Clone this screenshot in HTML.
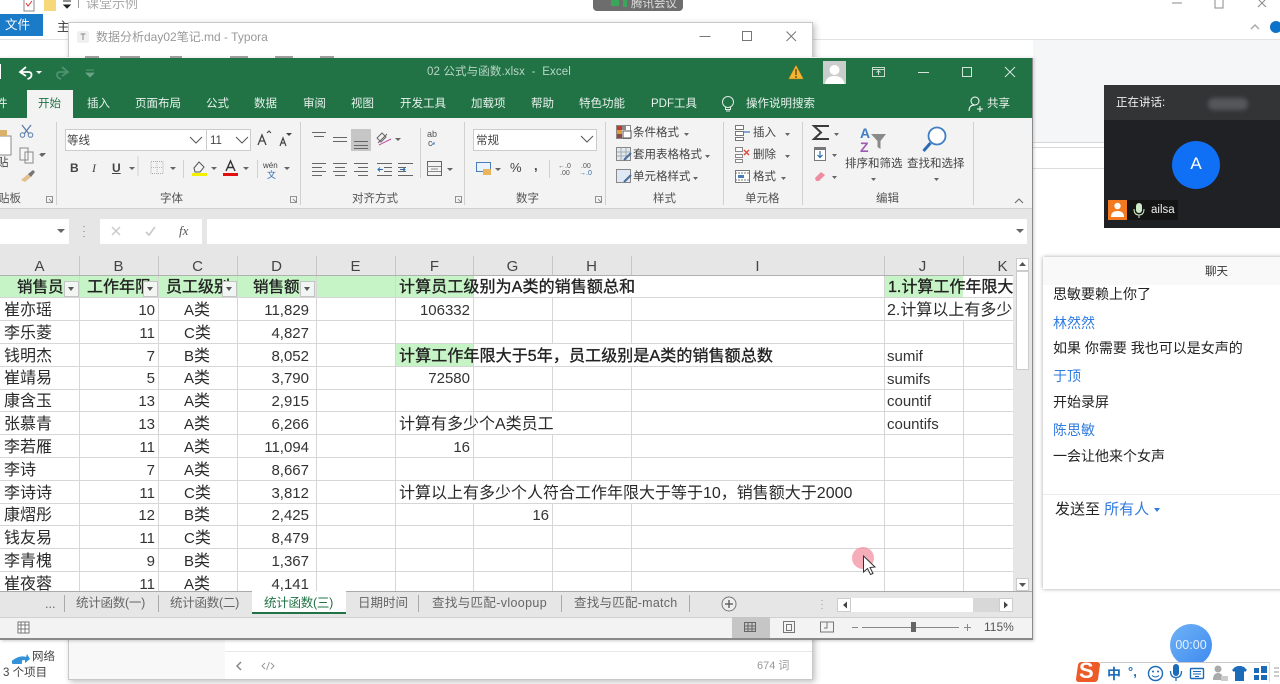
<!DOCTYPE html>
<html lang="zh"><head><meta charset="utf-8"><title>Excel</title>
<style>
html,body{margin:0;padding:0;background:#fff}
body{width:1280px;height:682px;overflow:hidden;position:relative;font-family:"Liberation Sans","Noto Sans CJK SC",sans-serif;color:#333;filter:blur(.3px)}
.b,.t{position:absolute}
.t{white-space:nowrap;line-height:20px;font-size:11.5px}
svg{position:absolute;left:0;top:0}
.tab{color:#e8f1ec;font-size:11.5px;transform:translateY(1px)}
.r{color:#444;font-size:11.5px;transform:translateY(1px)}
.c{font-size:16px;color:#2a2a2a;transform:translateY(1px)}
.n{font-size:15px;color:#333;text-align:right;transform:translateY(1px)}
.h{font-size:16px;color:#222;font-weight:400;-webkit-text-stroke:.35px #222;transform:translateY(1px)}
.g{color:#555;font-size:11.5px;transform:translateY(1px)}
.s{font-size:12.5px;color:#666}
.ct{font-size:14px;color:#222}
.bl{color:#2f7be0}
.col{font-size:15px;color:#444;text-align:center;width:79px;transform:translateY(1px)}
.fb{background:#f2f6f2;border:1px solid #c4c4c4;width:15px;height:16px;box-sizing:border-box}
.fb:after{content:"";position:absolute;left:3px;top:5px;border:3.5px solid transparent;border-top:4px solid #555}
</style></head><body>

<!-- back window -->
<div class="b" style="left:0;top:39px;width:1280px;height:1px;background:#e2e2e2"></div>
<div class="b" style="left:1033px;top:40px;width:247px;height:102px;background:#f5f6f7"></div>
<div class="b" style="left:1033px;top:142px;width:247px;height:1px;background:#d8d8d8"></div>
<div class="b" style="left:1033px;top:147px;width:247px;height:1px;background:#d8d8d8"></div>
<div class="b" style="left:1033px;top:168px;width:247px;height:1px;background:#dcdcdc"></div>
<div class="t" style="left:86px;top:-6px;font-size:13px;color:#aaa">课堂示例</div>
<div class="b" style="left:0;top:14px;width:43px;height:22px;background:#1a7bc9"></div>
<div class="t" style="left:5px;top:15px;font-size:12.5px;color:#fff">文件</div>
<div class="t" style="left:57px;top:17px;font-size:12.5px;color:#333">主</div>
<div class="t" style="left:3px;top:663px;font-size:11.5px;color:#444">3 个项目</div>
<div class="t" style="left:32px;top:647px;font-size:11.5px;color:#444">网络</div>
<div class="b" style="left:593px;top:-4px;width:90px;height:15px;background:#6d6d6d;border-radius:4px"></div>
<div class="t" style="left:631px;top:-6px;font-size:11.5px;color:#ddd">腾讯会议</div>

<!-- typora -->
<div class="b" style="left:68px;top:22px;width:745px;height:658px;background:#fff;border:1px solid #c8c8c8;box-sizing:border-box;box-shadow:2px 2px 6px rgba(0,0,0,.25)"></div>
<div class="b" style="left:69px;top:640px;width:156px;height:39px;background:#f8f8f8"></div>
<div class="b" style="left:225px;top:651px;width:587px;height:1px;background:#e8e8e8"></div>
<div class="t" style="left:96px;top:27px;font-size:12px;color:#999">数据分析day02笔记.md - Typora</div>
<div class="t" style="left:757px;top:656px;font-size:11px;color:#999">674 词</div>

<!-- excel -->
<div class="b" style="left:0;top:57px;width:1033px;height:583px;background:#f3f3f3;box-shadow:1px 1px 3px rgba(0,0,0,.2)"></div>
<div class="b" style="left:0;top:58px;width:1032px;height:60px;background:#217346"></div>
<div class="t" style="left:427px;top:62px;font-size:11.5px;letter-spacing:.12px;color:#b9d6c6">02 公式与函数.xlsx &nbsp;-&nbsp; Excel</div>
<div class="b" style="left:27px;top:90px;width:46px;height:28px;background:#f3f3f3"></div>
<div class="t tab" style="left:-4px;top:93px">件</div>
<div class="t tab" style="left:38px;top:93px;color:#217346">开始</div>
<div class="t tab" style="left:87px;top:93px">插入</div>
<div class="t tab" style="left:135px;top:93px">页面布局</div>
<div class="t tab" style="left:206px;top:93px">公式</div>
<div class="t tab" style="left:254px;top:93px">数据</div>
<div class="t tab" style="left:303px;top:93px">审阅</div>
<div class="t tab" style="left:351px;top:93px">视图</div>
<div class="t tab" style="left:400px;top:93px">开发工具</div>
<div class="t tab" style="left:471px;top:93px">加载项</div>
<div class="t tab" style="left:531px;top:93px">帮助</div>
<div class="t tab" style="left:579px;top:93px">特色功能</div>
<div class="t tab" style="left:651px;top:93px">PDF工具</div>
<div class="t tab" style="left:746px;top:93px">操作说明搜索</div>
<div class="t tab" style="left:987px;top:93px">共享</div>

<!-- ribbon boxes -->
<div class="b" style="left:65px;top:129px;width:186px;height:22px;background:#fff;border:1px solid #ccc;box-sizing:border-box"></div>
<div class="b" style="left:206px;top:129px;width:1px;height:22px;background:#ccc"></div>
<div class="t" style="left:67px;top:131px;font-size:11.5px;color:#444">等线</div>
<div class="t" style="left:210px;top:131px;font-size:11.5px;color:#444">11</div>
<div class="b" style="left:473px;top:129px;width:124px;height:22px;background:#fff;border:1px solid #ccc;box-sizing:border-box"></div>
<div class="t" style="left:476px;top:131px;font-size:11.5px;color:#444">常规</div>
<div class="b" style="left:351px;top:129px;width:20px;height:22px;background:#c6c6c6"></div>
<div class="t" style="left:-3px;top:153px;font-size:11.5px;color:#444">贴</div>
<div class="t" style="left:70px;top:158px;font-size:12px;font-weight:bold;color:#444">B</div>
<div class="t" style="left:92px;top:158px;font-size:12px;font-style:italic;font-family:'Liberation Serif',serif;color:#444">I</div>
<div class="t" style="left:112px;top:158px;font-size:12px;font-weight:bold;color:#444;text-decoration:underline">U</div>
<div class="t" style="left:510px;top:158px;font-size:13px;color:#444">%</div>
<div class="t" style="left:534px;top:156px;font-size:13px;font-weight:bold;color:#444">,</div>
<div class="t" style="left:263px;top:156px;font-size:8px;color:#444">wén</div>
<div class="t" style="left:267px;top:165px;font-size:9px;color:#2b6cb0">文</div>
<div class="t r" style="left:633px;top:122px">条件格式</div>
<div class="t r" style="left:633px;top:144px">套用表格格式</div>
<div class="t r" style="left:633px;top:166px">单元格样式</div>
<div class="t r" style="left:753px;top:122px">插入</div>
<div class="t r" style="left:753px;top:144px">删除</div>
<div class="t r" style="left:753px;top:166px">格式</div>
<div class="t r" style="left:845px;top:153px">排序和筛选</div>
<div class="t r" style="left:907px;top:153px">查找和选择</div>
<div class="t g" style="left:-2px;top:188px">贴板</div>
<div class="t g" style="left:160px;top:188px">字体</div>
<div class="t g" style="left:352px;top:188px">对齐方式</div>
<div class="t g" style="left:516px;top:188px">数字</div>
<div class="t g" style="left:653px;top:188px">样式</div>
<div class="t g" style="left:745px;top:188px">单元格</div>
<div class="t g" style="left:876px;top:188px">编辑</div>
<div class="b" style="left:0;top:208px;width:1032px;height:1px;background:#d0d0d0"></div>

<!-- formula bar -->
<div class="b" style="left:0;top:209px;width:1032px;height:67px;background:#e6e6e6"></div>
<div class="b" style="left:0;top:219px;width:69px;height:25px;background:#fff"></div>
<div class="b" style="left:100px;top:219px;width:102px;height:25px;background:#fff"></div>
<div class="b" style="left:207px;top:219px;width:820px;height:25px;background:#fff"></div>
<div class="t" style="left:179px;top:221px;font-size:13px;font-style:italic;font-family:'Liberation Serif',serif;color:#555">fx</div>

<!-- sheet -->
<div class="b" style="left:0;top:276px;width:1014px;height:316px;background:#fff"></div>
<div class="b" style="left:0;top:276px;width:395px;height:22px;background:#c6f4c6"></div>
<div class="b" style="left:395px;top:276px;width:79px;height:22px;background:#c6f4c6"></div>
<div class="b" style="left:884px;top:276px;width:79px;height:22px;background:#c6f4c6"></div>
<div class="b" style="left:395px;top:344px;width:79px;height:22px;background:#c6f4c6"></div>
<div class="b" style="left:0;top:275px;width:1014px;height:1px;background:#b0b0b0"></div>

<svg width="1280" height="682" viewBox="0 0 1280 682" fill="none">
<g stroke="#d6d6d6" stroke-width="1">
<path d="M0 297.500H1014M0 320.500H1014M0 343.500H1014M0 366.500H1014M0 389.500H1014M0 411.500H1014M0 434.500H1014M0 457.500H1014M0 480.500H1014M0 503.500H1014M0 525.500H1014M0 548.500H1014M0 571.500H1014"/>
<path d="M79.500 276V592M158.500 276V592M237.500 276V592M316.500 276V592M395.500 276V592M473.500 276V592M552.500 276V592M631.500 276V592M884.500 276V592M963.500 276V592"/>
</g>
<g stroke="#c6c6c6"><path d="M79.500 256V275M158.500 256V275M237.500 256V275M316.500 256V275M395.500 256V275M473.500 256V275M552.500 256V275M631.500 256V275M884.500 256V275M963.500 256V275"/></g>
<g fill="#fff"><rect x="474" y="276" width="160" height="21"/><rect x="474" y="344" width="400" height="22"/><rect x="474" y="412" width="80" height="22"/><rect x="396" y="481" width="470" height="22"/><rect x="963" y="298" width="3" height="22"/><rect x="963" y="276" width="3" height="21"/></g>
</svg>

<div class="t col" style="left:0;top:256px">A</div>
<div class="t col" style="left:79px;top:256px">B</div>
<div class="t col" style="left:158px;top:256px">C</div>
<div class="t col" style="left:237px;top:256px">D</div>
<div class="t col" style="left:316px;top:256px">E</div>
<div class="t col" style="left:395px;top:256px">F</div>
<div class="t col" style="left:473px;top:256px">G</div>
<div class="t col" style="left:552px;top:256px">H</div>
<div class="t col" style="left:718px;top:256px">I</div>
<div class="t col" style="left:883px;top:256px">J</div>
<div class="t col" style="left:963px;top:256px">K</div>

<div class="t h" style="left:17px;top:277px;font-size:15.500px">销售员</div>
<div class="t h" style="left:87px;top:277px">工作年限</div>
<div class="t h" style="left:166px;top:277px">员工级别</div>
<div class="t h" style="left:253px;top:277px;font-size:15.500px">销售额</div>
<div class="b fb" style="left:64px;top:281px"></div>
<div class="b fb" style="left:143px;top:281px"></div>
<div class="b fb" style="left:222px;top:281px"></div>
<div class="b fb" style="left:300px;top:281px"></div>

<div class="t c" style="left:4px;top:300px">崔亦瑶</div><div class="t n" style="right:1125px;top:300px">10</div><div class="t c" style="left:184px;top:300px"><span style="font-size:15px">A</span>类</div><div class="t n" style="right:971px;top:300px">11,829</div>
<div class="t c" style="left:4px;top:323px">李乐菱</div><div class="t n" style="right:1125px;top:323px">11</div><div class="t c" style="left:184px;top:323px"><span style="font-size:15px">C</span>类</div><div class="t n" style="right:971px;top:323px">4,827</div>
<div class="t c" style="left:4px;top:346px">钱明杰</div><div class="t n" style="right:1125px;top:346px">7</div><div class="t c" style="left:184px;top:346px"><span style="font-size:15px">B</span>类</div><div class="t n" style="right:971px;top:346px">8,052</div>
<div class="t c" style="left:4px;top:368px">崔靖易</div><div class="t n" style="right:1125px;top:368px">5</div><div class="t c" style="left:184px;top:368px"><span style="font-size:15px">A</span>类</div><div class="t n" style="right:971px;top:368px">3,790</div>
<div class="t c" style="left:4px;top:391px">康含玉</div><div class="t n" style="right:1125px;top:391px">13</div><div class="t c" style="left:184px;top:391px"><span style="font-size:15px">A</span>类</div><div class="t n" style="right:971px;top:391px">2,915</div>
<div class="t c" style="left:4px;top:414px">张慕青</div><div class="t n" style="right:1125px;top:414px">13</div><div class="t c" style="left:184px;top:414px"><span style="font-size:15px">A</span>类</div><div class="t n" style="right:971px;top:414px">6,266</div>
<div class="t c" style="left:4px;top:437px">李若雁</div><div class="t n" style="right:1125px;top:437px">11</div><div class="t c" style="left:184px;top:437px"><span style="font-size:15px">A</span>类</div><div class="t n" style="right:971px;top:437px">11,094</div>
<div class="t c" style="left:4px;top:460px">李诗</div><div class="t n" style="right:1125px;top:460px">7</div><div class="t c" style="left:184px;top:460px"><span style="font-size:15px">A</span>类</div><div class="t n" style="right:971px;top:460px">8,667</div>
<div class="t c" style="left:4px;top:483px">李诗诗</div><div class="t n" style="right:1125px;top:483px">11</div><div class="t c" style="left:184px;top:483px"><span style="font-size:15px">C</span>类</div><div class="t n" style="right:971px;top:483px">3,812</div>
<div class="t c" style="left:4px;top:505px">康熠彤</div><div class="t n" style="right:1125px;top:505px">12</div><div class="t c" style="left:184px;top:505px"><span style="font-size:15px">B</span>类</div><div class="t n" style="right:971px;top:505px">2,425</div>
<div class="t c" style="left:4px;top:528px">钱友易</div><div class="t n" style="right:1125px;top:528px">11</div><div class="t c" style="left:184px;top:528px"><span style="font-size:15px">C</span>类</div><div class="t n" style="right:971px;top:528px">8,479</div>
<div class="t c" style="left:4px;top:551px">李青槐</div><div class="t n" style="right:1125px;top:551px">9</div><div class="t c" style="left:184px;top:551px"><span style="font-size:15px">B</span>类</div><div class="t n" style="right:971px;top:551px">1,367</div>
<div class="t c" style="left:4px;top:574px">崔夜蓉</div><div class="t n" style="right:1125px;top:574px">11</div><div class="t c" style="left:184px;top:574px"><span style="font-size:15px">A</span>类</div><div class="t n" style="right:971px;top:574px">4,141</div>

<div class="t h" style="left:399px;top:277px;letter-spacing:.1px">计算员工级别为A类的销售额总和</div>
<div class="t n" style="right:810px;top:300px">106332</div>
<div class="t h" style="left:399px;top:346px;letter-spacing:.1px">计算工作年限大于5年，员工级别是A类的销售额总数</div>
<div class="t n" style="right:810px;top:368px">72580</div>
<div class="t c" style="left:399px;top:414px">计算有多少个A类员工</div>
<div class="t n" style="right:810px;top:437px">16</div>
<div class="t c" style="left:399px;top:483px">计算以上有多少个人符合工作年限大于等于10，销售额大于2000</div>
<div class="t n" style="right:731px;top:505px">16</div>
<div class="t h" style="left:888px;top:277px">1.计算工作年限大</div>
<div class="t c" style="left:887px;top:300px">2.计算以上有多少</div>
<div class="t n" style="left:887px;top:346px">sumif</div>
<div class="t n" style="left:887px;top:369px">sumifs</div>
<div class="t n" style="left:887px;top:391px">countif</div>
<div class="t n" style="left:887px;top:414px">countifs</div>

<!-- scrollbar -->
<div class="b" style="left:1013px;top:256px;width:19px;height:336px;background:#e6e6e6"></div>
<div class="b" style="left:1016px;top:258px;width:13px;height:13px;background:#fff;border:1px solid #ccc;box-sizing:border-box"></div>
<div class="b" style="left:1016px;top:271px;width:13px;height:99px;background:#fff;border:1px solid #ccc;box-sizing:border-box"></div>
<div class="b" style="left:1016px;top:578px;width:13px;height:13px;background:#fff;border:1px solid #ccc;box-sizing:border-box"></div>

<!-- sheet tabs -->
<div class="b" style="left:0;top:591px;width:1032px;height:26px;background:#e6e6e6;border-top:1px solid #aaa;box-sizing:border-box"></div>
<div class="b" style="left:252px;top:591px;width:94px;height:23px;background:#fff;border-bottom:2px solid #217346;box-sizing:border-box"></div>
<div class="t s" style="left:45px;top:594px">...</div>
<div class="t s" style="left:76px;top:593px;letter-spacing:-.25px">统计函数(一)</div>
<div class="t s" style="left:170px;top:593px;letter-spacing:-.25px">统计函数(二)</div>
<div class="t s" style="left:264px;top:593px;letter-spacing:-.25px;color:#217346">统计函数(三)</div>
<div class="t s" style="left:358px;top:593px">日期时间</div>
<div class="t s" style="left:432px;top:593px;letter-spacing:.35px">查找与匹配-vloopup</div>
<div class="t s" style="left:574px;top:593px;letter-spacing:.25px">查找与匹配-match</div>
<div class="b" style="left:837px;top:598px;width:14px;height:14px;background:#fff;border:1px solid #ccc;box-sizing:border-box"></div>
<div class="b" style="left:851px;top:598px;width:148px;height:14px;background:#d8d8d8"></div>
<div class="b" style="left:851px;top:598px;width:122px;height:14px;background:#fff"></div>
<div class="b" style="left:999px;top:598px;width:14px;height:14px;background:#fff;border:1px solid #ccc;box-sizing:border-box"></div>

<!-- status -->
<div class="b" style="left:0;top:617px;width:1032px;height:22px;background:#f3f3f3;border-top:1px solid #d0d0d0;box-sizing:border-box"></div>
<div class="b" style="left:732px;top:617px;width:38px;height:21px;background:#c6c6c6"></div>
<div class="b" style="left:0;top:638px;width:1033px;height:2px;background:#8a8a8a"></div>
<div class="b" style="left:1032px;top:58px;width:1px;height:582px;background:#8a8a8a"></div>
<div class="t" style="left:984px;top:617px;font-size:12px;color:#555">115%</div>

<!-- icons -->
<svg width="1280" height="682" viewBox="0 0 1280 682" fill="none">
<rect x="24" y="-3" width="10" height="14" fill="#fff" stroke="#888"/><path d="M26 3l2 3 4-5" stroke="#d33"/>
<rect x="44" y="-3" width="12" height="14" fill="#f6d77a"/>
<path d="M63 1h8M64 5h6l-3 3z" stroke="#222" fill="#222"/>
<path d="M78.500 0V8" stroke="#999"/>
<path d="M1172 3h10M1215 0v8h8V0M1258 -1l8 8M1266 -1l-8 8" stroke="#888"/>
<path d="M1251 29l4-4 4 4" stroke="#aaa" stroke-width="1.500"/>
<circle cx="1276" cy="27" r="6" fill="#0d72c9"/>
<rect x="611" y="0" width="8" height="6" fill="#3aa65a"/>
<rect x="623" y="0" width="4" height="7" fill="#3aa65a"/>
<rect x="77" y="31" width="12" height="12" rx="2" fill="#f0f0f0"/><path d="M80.500 34h5M83 34v6" stroke="#888"/>
<path d="M699.500 36.500h11" stroke="#777"/><rect x="742.500" y="31.500" width="9" height="9" stroke="#777"/><path d="M786.500 31.500l9.500 9.500M796 31.500l-9.500 9.500" stroke="#777"/>
<path d="M241 662l-4 4 4 4" stroke="#888" stroke-width="1.500"/>
<path d="M265 663l-3 3 3 3M271 663l3 3-3 3M269.500 662l-3 8" stroke="#999"/>
<path d="M13 660q7-5 13-3l1-3 3 5-5 4v-3q-4 0-8 3z" fill="#3493d8"/><rect x="12" y="660" width="10" height="4" rx="1" fill="#3493d8"/>
<path d="M85 57h14M120 57h20M170 57h12M230 57h18M275 57h18M320 57h14" stroke="#444"/>
<path d="M0 64v15" stroke="#fff" stroke-width="2"/>
<path d="M26 67l-6 5 6 4M20.500 72h8q3 0 3 3t-4 4" stroke="#fff" stroke-width="1.800"/><path d="M36 71h6l-3 3z" fill="#fff"/>
<path d="M62 67l6 5-6 4M68 72h-8q-3 0-3 3t4 4" stroke="#4f9170" stroke-width="1.800"/>
<path d="M86 70h8M86 73h8l-4 4z" fill="#6ba286" stroke="#6ba286" stroke-width=".8"/>
<path d="M796 65l7.500 14h-15z" fill="#f2b632" stroke="#8f6a1a" stroke-width=".5"/><path d="M796 69v6M796 76v2" stroke="#4a3510" stroke-width="1.200"/>
<rect x="823" y="61" width="23" height="23" fill="#c9cdcb"/><circle cx="834.500" cy="70" r="5" fill="#fff"/><path d="M825 84q1-8 9.500-8t10 8z" fill="#fff"/>
<rect x="872.500" y="67.500" width="12" height="9" stroke="#c7dccf"/><path d="M872.500 69.500h12M878.500 75v-4M876.500 72.500l2-2 2 2" stroke="#c7dccf"/>
<path d="M918 72.500h11" stroke="#d5e5dc"/><rect x="962.500" y="67.500" width="9" height="9" stroke="#d5e5dc"/><path d="M1005 67l10 10M1015 67l-10 10" stroke="#d5e5dc"/>
<circle cx="728" cy="102" r="5.500" stroke="#dfeae4"/><path d="M725.500 107v2.500h5V107M726 111h4" stroke="#dfeae4"/>
<circle cx="975" cy="101" r="4" stroke="#fff"/><path d="M969 111q0-6 6-6M977 109h6M980 106v6" stroke="#fff"/>
<rect x="-4" y="136" width="15" height="19" fill="#fff" stroke="#888"/><rect x="-2" y="130" width="9" height="6" fill="#d8b26a"/>
<path d="M22 125l7 9M31 125l-7 9" stroke="#5b7ea8" stroke-width="1.300"/><circle cx="22.500" cy="135" r="2.300" stroke="#5b7ea8"/><circle cx="30.500" cy="135" r="2.300" stroke="#5b7ea8"/>
<path d="M20 148h8v12h-8zM25 152h8v11h-8z" fill="#f6f6f6" stroke="#888"/><path d="M40 153h6l-3 3z" fill="#666"/>
<path d="M21 180l7-6 3 3-6 5z" fill="#e2c08c"/><path d="M28 174l5-4 2 2-4 5z" fill="#777"/>
<path d="M190 137l6 6 6-6M236 137l6 6 6-6" stroke="#555"/>
<path d="M258 145l4-10 4 10M259.500 141h5" stroke="#444" stroke-width="1.300"/><path d="M267 133l2-2 2 2" stroke="#444"/>
<path d="M280 146l3-8 3 8M281 143h4" stroke="#444" stroke-width="1.200"/><path d="M286 133h6l-3 3z" fill="#444"/>
<path d="M129 167h6l-3 3zM170 167h6l-3 3zM211 167h6l-3 3zM243 167h6l-3 3zM284 167h6l-3 3zM395 138h6l-3 3zM447 168h6l-3 3zM495 168h6l-3 3zM39 154h6l-3 3z" fill="#666"/>
<rect x="151" y="161.500" width="12" height="12" stroke="#aaa" stroke-dasharray="1 1"/><path d="M157 161v13M151 167.500h12" stroke="#bbb" stroke-dasharray="1 1"/>
<path d="M194 168l5-6 5 5-4 5h-5z" fill="#f4f4f4" stroke="#555"/><rect x="192" y="173" width="15" height="3" fill="#f2f200"/>
<path d="M226 171l4.500-10 4.500 10M228 167.500h5" stroke="#333" stroke-width="1.400"/><rect x="223" y="173" width="15" height="3" fill="#e01010"/>
<g stroke="#666"><path d="M312 132.500h14M314 136.500h10M333 137.500h14M333 141.500h14M354 141.500h14M354 145.500h14M354 148.500h14"/>
<path d="M312 163.500h14M312 167.500h10M312 171.500h14M312 175.500h10M333 163.500h14M335 167.500h10M333 171.500h14M335 175.500h10M354 163.500h14M358 167.500h10M354 171.500h14M358 175.500h10"/>
<path d="M377 163.500h15M384 167.500h8M384 171.500h8M377 175.500h15M398 163.500h15M398 167.500h8M398 171.500h8M398 175.500h15"/></g>
<path d="M383 169.500h-5m2-2l-2 2 2 2M400 169.500h5m-2-2l2 2-2 2" stroke="#2b6cb0"/>
<path d="M378 143l9-9M382 133l-5 5 4 4 5-5z" stroke="#666"/><path d="M379 145l12-6" stroke="#c24a9d"/>
<text x="427" y="137" font-size="9" fill="#555" font-family="Liberation Sans">ab</text><text x="428" y="146" font-size="9" fill="#555" font-family="Liberation Sans">c</text><path d="M434 142v2h-2" stroke="#2b6cb0"/>
<rect x="427.500" y="161.500" width="14" height="14" stroke="#666"/><path d="M427 166.500h14M427 171.500h14M431 169h7" stroke="#888"/>
<path d="M581 136l6 6 6-6" stroke="#555"/>
<rect x="476.500" y="162.500" width="14" height="9" fill="#eaf2fb" stroke="#4a7ebb"/><rect x="483" y="169" width="8" height="6" fill="#e8b45c"/>
<text x="558" y="168" font-size="7" fill="#555" font-family="Liberation Sans">←.0</text><text x="560" y="175" font-size="7" fill="#555" font-family="Liberation Sans">.00</text>
<text x="581" y="168" font-size="7" fill="#555" font-family="Liberation Sans">.00</text><text x="579" y="175" font-size="7" fill="#2b6cb0" font-family="Liberation Sans">→.0</text>
<rect x="616.500" y="125.500" width="14" height="13" fill="#fff" stroke="#888"/><rect x="617" y="126" width="5" height="4" fill="#c0392b"/><rect x="622" y="126" width="4" height="4" fill="#8a8a8a"/><rect x="617" y="130" width="5" height="4" fill="#e39a3a"/><rect x="617" y="134" width="5" height="4" fill="#8a4a4a"/><rect x="623" y="131" width="8" height="7" fill="#fff" stroke="#555"/>
<rect x="616.500" y="147.500" width="14" height="13" fill="#dfe8f3" stroke="#888"/><path d="M621 148v12M626 148v12M617 152h13M617 156h13" stroke="#aaa"/><path d="M624 160l7-7" stroke="#4a6d99" stroke-width="2"/>
<rect x="616.500" y="169.500" width="14" height="13" fill="#dfe8f3" stroke="#888"/><path d="M624 182l7-7" stroke="#4a6d99" stroke-width="2"/>
<path d="M684 133h5l-2.500 3zM705 155h5l-2.500 3zM693 177h5l-2.500 3zM785 133h5l-2.500 3zM785 155h5l-2.500 3zM781 177h5l-2.500 3zM834 133h5l-2.500 3zM832 154h5l-2.500 3zM832 176h5l-2.500 3zM871 178h5l-2.500 3zM934 178h5l-2.500 3z" fill="#666"/>
<path d="M735.500 125.500h8v4h-8zM735.500 131.500h8v4h-8zM735.500 137.500h8v3h-8z" stroke="#777" fill="#fff"/><path d="M744 132h6" stroke="#4a7ebb" stroke-width="1.300"/>
<path d="M735.500 147.500h7v4h-7zM735.500 154.500h7v3h-7zM735.500 159.500h7v3h-7z" stroke="#888" fill="#fff"/><path d="M744 150l5 5M749 150l-5 5" stroke="#e0463a" stroke-width="1.400"/>
<rect x="735.500" y="170.500" width="14" height="12" fill="#fff" stroke="#777"/><path d="M735 173h15M735 180h15" stroke="#777" stroke-dasharray="2 1"/><rect x="738" y="175" width="6" height="3" fill="#4a7ebb"/>
<path d="M829 126h-15l7 6.500-7 6.500h15" stroke="#3b3b3b" stroke-width="2"/>
<rect x="814.500" y="147.500" width="11" height="13" fill="#fff" stroke="#777"/><rect x="814" y="147" width="12" height="3" fill="#777"/><path d="M820 151v6M817.500 155l2.500 2.500 2.500-2.500" stroke="#2b6cb0" stroke-width="1.200"/>
<path d="M815 178l6-6 4 3-6 6h-3z" fill="#ee8ca0"/>
<text x="860" y="138" font-size="14" font-weight="bold" fill="#3f7dc4" font-family="Liberation Sans">A</text><text x="860" y="152" font-size="14" font-weight="bold" fill="#9c5bb0" font-family="Liberation Sans">Z</text>
<path d="M871 134h15l-5.500 7v8l-3-2v-6z" fill="#8a8a8a"/>
<circle cx="937" cy="136" r="8.500" stroke="#3f7dc4" stroke-width="1.800" fill="#fff"/><path d="M930.500 143l-7 8" stroke="#2c6cb6" stroke-width="3"/>
<g stroke="#d0d0d0"><path d="M56.500 122V205M300.500 122V205M464.500 122V205M605.500 122V205M723.500 122V205M802.500 122V205M973.500 122V205M138 156v20M183.500 160v18M257.500 160v18M420.500 128v50M549.500 160v18"/></g>
<g stroke="#777" stroke-width=".8"><path d="M46.500 196.500h6v6h-6zM49 199l3 3M290.500 196.500h6v6h-6zM293 199l3 3M455.500 196.500h6v6h-6zM458 199l3 3M595.500 196.500h6v6h-6zM598 199l3 3"/></g>
<path d="M1015 203l4-4 4 4" stroke="#666"/>
<path d="M57 229h8l-4 4z" fill="#666"/>
<path d="M84 226v1M84 231v1M84 236v1" stroke="#999" stroke-width="1.500"/>
<path d="M112 227l8 8M120 227l-8 8" stroke="#c8c8c8" stroke-width="1.400"/>
<path d="M146 232l3 3 6-8" stroke="#c8c8c8" stroke-width="1.600"/>
<path d="M1016 229h8l-4 4z" fill="#666"/>
<path d="M1019 266l3.500-4 3.500 4z" fill="#555"/><path d="M1019 583l3.500 4 3.500-4z" fill="#555"/>
<path d="M847 601.500v7l-4-3.500zM1004 601.500v7l4-3.500z" fill="#444"/>
<g stroke="#aaa"><path d="M64.500 595V612M158.500 595V612M418.500 595V612M561.500 595V612M689.500 595V612"/></g>
<circle cx="729" cy="604" r="7" stroke="#777" fill="#eee"/><path d="M725 604h8M729 600v8" stroke="#666" stroke-width="1.500"/>
<path d="M822 600v1M822 604v1M822 608v1" stroke="#999"/>
<rect x="18" y="622" width="11" height="11" fill="#fff" stroke="#777"/><path d="M18 625h11M21 622v11M25 622v11M18 629h11" stroke="#777"/>
<rect x="744.500" y="622.500" width="11" height="9" stroke="#666"/><path d="M748 622v10M752 622v10M744 626h12M744 629h12" stroke="#666"/>
<rect x="783.500" y="621.500" width="11" height="11" stroke="#777"/><rect x="786.500" y="624.500" width="5" height="6" stroke="#777"/>
<path d="M820.500 632v-10h13v10zM827 622v6h-3" stroke="#777"/>
<path d="M852 627.500h6M862 627.500h97M964 627.500h7M967.500 624v7" stroke="#888"/><rect x="911" y="622" width="5" height="10" fill="#666"/>
<circle cx="863" cy="558" r="11" fill="#f18a9c" fill-opacity=".7"/>
<path d="M863.500 556v16l4-3.500 3 6 2.500-1-3-6 5-.5z" fill="#fff" stroke="#333" stroke-width="1"/>
</svg>

<!-- meeting video panel -->
<div class="b" style="left:1104px;top:85px;width:176px;height:143px;background:#202124"></div>
<div class="b" style="left:1104px;top:85px;width:176px;height:35px;background:#333436"></div>
<div class="t" style="left:1116px;top:93px;font-size:11.500px;color:#eee">正在讲话:</div>
<div class="b" style="left:1208px;top:98px;width:40px;height:12px;background:#55575a;border-radius:6px;filter:blur(2px)"></div>
<div class="b" style="left:1172px;top:141px;width:48px;height:48px;background:#0f6ff5;border-radius:50%"></div>
<div class="t" style="left:1172px;top:154px;width:48px;text-align:center;font-size:17px;color:#fff">A</div>
<div class="b" style="left:1108px;top:200px;width:70px;height:20px;background:#151516"></div>
<div class="b" style="left:1108px;top:200px;width:19px;height:20px;background:#f37a20"></div>
<div class="t" style="left:1151px;top:200px;font-size:11.5px;color:#eee">ailsa</div>
<svg width="1280" height="682" viewBox="0 0 1280 682" fill="none">
<circle cx="1117.500" cy="206" r="3.200" fill="#fff"/><path d="M1111 217q0-6 6.500-6t6.500 6z" fill="#fff"/>
<rect x="1136" y="203" width="6" height="10" rx="3" fill="#cdeac6"/><path d="M1134 209q0 6 5 6t5-6M1139 215v3" stroke="#cdeac6"/>
</svg>

<!-- chat -->
<div class="b" style="left:1043px;top:257px;width:240px;height:332px;background:#fff;box-shadow:0 0 4px rgba(0,0,0,.35)"></div>
<div class="b" style="left:1043px;top:257px;width:240px;height:28px;background:#f9f9f9"></div>
<div class="t" style="left:1205px;top:262px;font-size:11.5px;color:#333">聊天</div>
<div class="t ct" style="left:1053px;top:284px">思敏要赖上你了</div>
<div class="t ct bl" style="left:1053px;top:313px">林然然</div>
<div class="t ct" style="left:1053px;top:338px">如果 你需要 我也可以是女声的</div>
<div class="t ct bl" style="left:1053px;top:366px">于顶</div>
<div class="t ct" style="left:1053px;top:392px">开始录屏</div>
<div class="t ct bl" style="left:1053px;top:420px">陈思敏</div>
<div class="t ct" style="left:1053px;top:446px">一会让他来个女声</div>
<div class="b" style="left:1043px;top:494px;width:237px;height:1px;background:#eaeaea"></div>
<div class="t" style="left:1055px;top:500px;font-size:15px;color:#222">发送至 <span class="bl">所有人</span></div>
<div class="b" style="left:1154px;top:508px;border:3.5px solid transparent;border-top:4px solid #2f7be0"></div>

<!-- timer -->
<div class="b" style="left:1170px;top:624px;width:42px;height:42px;border-radius:50%;background:linear-gradient(135deg,#6fb2f5,#3d8af0)"></div>
<div class="t" style="left:1170px;top:635px;width:42px;text-align:center;font-size:12.500px;color:#e4f0ff">00:00</div>

<!-- sogou bar -->
<div class="b" style="left:1100px;top:662px;width:170px;height:20px;background:#fff;border-top:1px solid #c8c8c8;border-right:1px solid #ddd;box-sizing:border-box"></div>
<div class="b" style="left:1077px;top:662px;width:22px;height:20px;background:#ec5a28;transform:skewX(-8deg);border-radius:3px"></div>
<div class="t" style="left:1079px;top:661px;font-size:22px;font-weight:bold;color:#fff">S</div>
<div class="t" style="left:1107px;top:664px;font-size:14px;font-weight:bold;color:#1b6bb8">中</div>
<div class="t" style="left:1128px;top:662px;font-size:13px;font-weight:bold;color:#1b6bb8">°,</div>
<svg width="1280" height="682" viewBox="0 0 1280 682" fill="none">
<circle cx="1155.500" cy="673.500" r="7" stroke="#1b6bb8" stroke-width="1.400"/><circle cx="1153" cy="671.500" r="1" fill="#1b6bb8"/><circle cx="1158" cy="671.500" r="1" fill="#1b6bb8"/><path d="M1152 675.500q3.500 3 7 0" stroke="#1b6bb8"/>
<rect x="1173" y="664" width="6" height="12" rx="3" fill="#1b6bb8"/><path d="M1170.500 671q0 6.500 5.500 6.500t5.500-6.500M1176 678v3" stroke="#1b6bb8" stroke-width="1.300"/>
<rect x="1190.500" y="668.500" width="13" height="10" rx="1" stroke="#1b6bb8" stroke-width="1.400"/><path d="M1193 671.500h8M1193 674h8M1195 676.500h4" stroke="#1b6bb8"/>
<circle cx="1218" cy="669" r="3.500" fill="#aaa"/><path d="M1213 680q0-7 5-7t5 7z" fill="#aaa"/><rect x="1221" y="676" width="7" height="5" fill="#ccc"/>
<path d="M1235 667l3-1h3l3 1 3 3-2 2-1-1v10h-9v-10l-1 1-2-2z" fill="#1b6bb8"/>
<rect x="1254" y="668" width="5" height="5" fill="#1b6bb8"/><rect x="1261" y="666" width="6" height="7" fill="#1b6bb8"/><rect x="1254" y="675" width="5" height="5" fill="#1b6bb8"/><rect x="1261" y="675" width="6" height="5" fill="#1b6bb8"/>
<path d="M1274 668h5M1274 672h5M1274 676h5" stroke="#999"/>
</svg>
</body></html>
